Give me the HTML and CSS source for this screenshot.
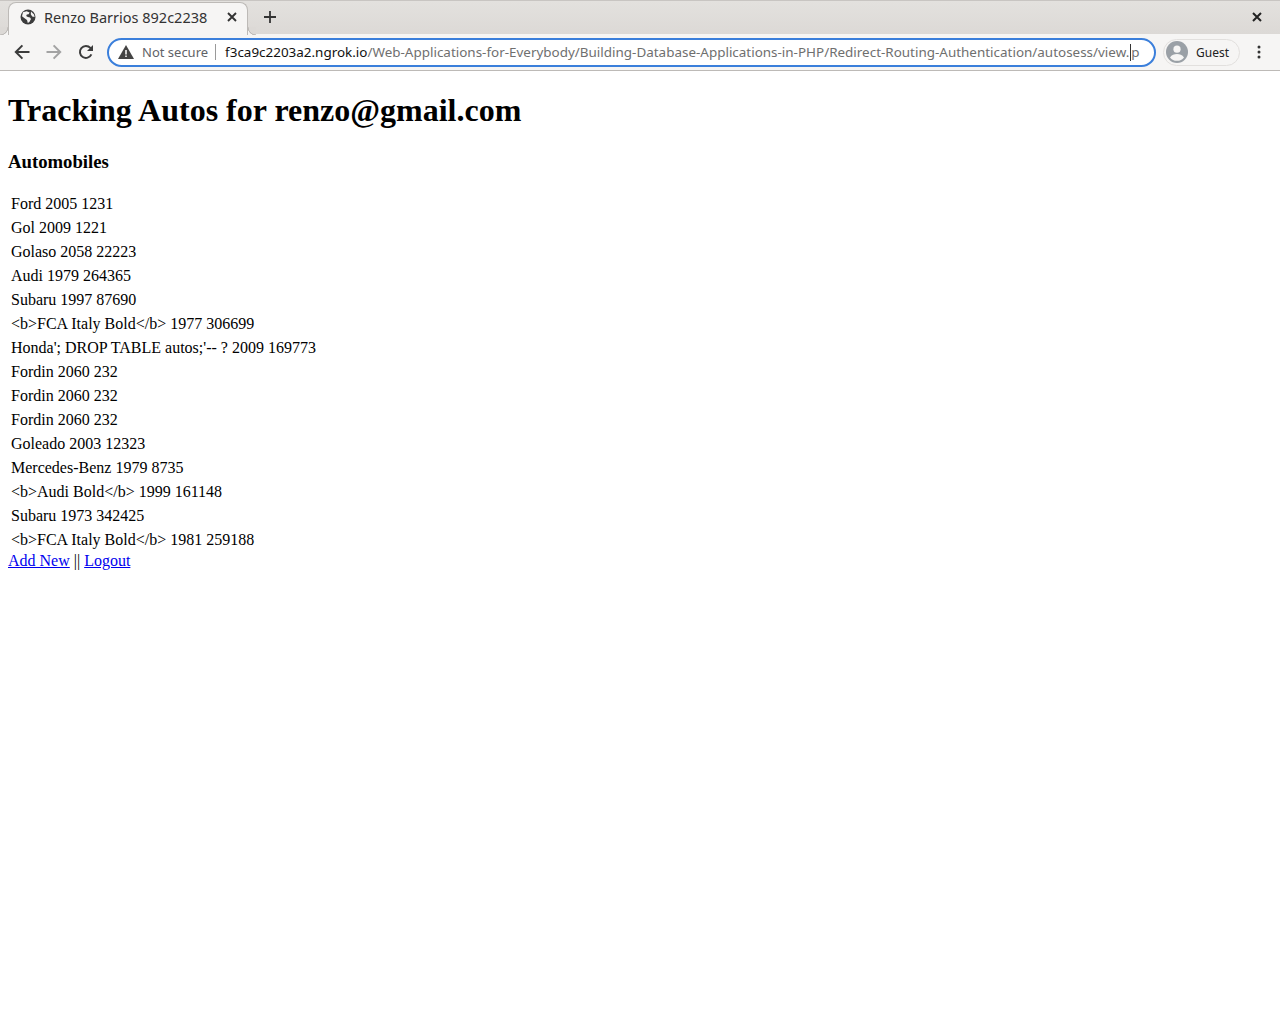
FILE: index.html
```html
<!DOCTYPE html>
<html lang="en">
<head>
  <meta charset="UTF-8">
  <title>Renzo Barrios 892c2238</title>
  <link rel="stylesheet" href="styles.css">
</head>
<body>
  <header class="browser">
    <div class="tabstrip">
      <div class="tab">
        <svg class="favicon" width="16" height="16" viewBox="0 0 16 16"><circle cx="8" cy="8" r="7.5" fill="#3c3c3c"/><path d="M3 3.2 6.6 2.2 9.6 3.4 8.6 5.2 6.8 5.4 6.2 7 7.8 8 10 8.4 11 10 9.4 13 7.8 14 7 11 4.6 9.2 2 7.2Z M11 2.6 14 5.4 14.6 8 12.2 7.4 10.8 5.2Z" fill="#f6f5f4"/></svg>
        <span class="tab-title">Renzo Barrios 892c2238</span>
        <svg class="tab-close" width="10" height="10" viewBox="0 0 10 10"><path d="M1 1 9 9M9 1 1 9" stroke="#333" stroke-width="1.9"/></svg>
      </div>
      <svg class="newtab" width="12" height="12" viewBox="0 0 12 12"><path d="M6 0V12M0 6H12" stroke="#333" stroke-width="1.8"/></svg>
      <svg class="winclose" width="10" height="10" viewBox="0 0 10 10"><path d="M1 1 9 9M9 1 1 9" stroke="#222" stroke-width="2"/></svg>
    </div>
    <div class="toolbar">
      <svg class="navicon" width="16" height="16" viewBox="0 0 16 16"><path d="M15.5 8H2M8.4 1.4 1.8 8l6.6 6.6" fill="none" stroke="#3c3c3c" stroke-width="2"/></svg>
      <svg class="navicon" width="16" height="16" viewBox="0 0 16 16"><path d="M.5 8H14M7.6 1.4 14.2 8l-6.6 6.6" fill="none" stroke="#a3a3a3" stroke-width="2"/></svg>
      <svg class="navicon" width="16" height="16" viewBox="0 0 16 16"><path d="M13.4 10.4A6 6 0 1 1 12.4 3.9L14 5.6" fill="none" stroke="#3c3c3c" stroke-width="2"/><path d="M15 1V7H9Z" fill="#3c3c3c"/></svg>
      <div class="omnibox">
        <svg class="warn" width="16" height="14" viewBox="0 0 16 14"><path d="M8 0 16 14H0Z" fill="#444"/><path d="M7.2 5H8.8V9.4H7.2ZM7.2 10.4H8.8V12H7.2Z" fill="#f6f5f4"/></svg>
        <span class="not-secure">Not secure</span>
        <span class="divider"></span>
        <span class="url"><span class="host">f3ca9c2203a2.ngrok.io</span>/Web-Applications-for-Everybody/Building-Database-Applications-in-PHP/Redirect-Routing-Authentication/autosess/view.<span class="caret"></span>p</span>
      </div>
      <div class="profile">
        <svg width="22" height="22" viewBox="0 0 22 22"><circle cx="11" cy="11" r="11" fill="#9aa0a6"/><circle cx="11" cy="8.2" r="3.6" fill="#f6f5f4"/><path d="M4 16.4C5.6 13.8 8.4 13 11 13s5.4.8 7 3.4A8.8 8.8 0 0 1 11 19.8 8.8 8.8 0 0 1 4 16.4Z" fill="#f6f5f4"/></svg>
        <span>Guest</span>
      </div>
      <svg class="menu" width="4" height="14" viewBox="0 0 4 14"><circle cx="2" cy="2" r="1.5" fill="#333"/><circle cx="2" cy="7" r="1.5" fill="#333"/><circle cx="2" cy="12" r="1.5" fill="#333"/></svg>
    </div>
  </header>

  <main class="page">
    <h1>Tracking Autos for renzo@gmail.com</h1>
    <h3>Automobiles</h3>
    <table>
      <tr><td>Ford 2005 1231</td></tr>
      <tr><td>Gol 2009 1221</td></tr>
      <tr><td>Golaso 2058 22223</td></tr>
      <tr><td>Audi 1979 264365</td></tr>
      <tr><td>Subaru 1997 87690</td></tr>
      <tr><td>&lt;b&gt;FCA Italy Bold&lt;/b&gt; 1977 306699</td></tr>
      <tr><td>Honda'; DROP TABLE autos;'-- ? 2009 169773</td></tr>
      <tr><td>Fordin 2060 232</td></tr>
      <tr><td>Fordin 2060 232</td></tr>
      <tr><td>Fordin 2060 232</td></tr>
      <tr><td>Goleado 2003 12323</td></tr>
      <tr><td>Mercedes-Benz 1979 8735</td></tr>
      <tr><td>&lt;b&gt;Audi Bold&lt;/b&gt; 1999 161148</td></tr>
      <tr><td>Subaru 1973 342425</td></tr>
      <tr><td>&lt;b&gt;FCA Italy Bold&lt;/b&gt; 1981 259188</td></tr>
    </table>
    <a href="#">Add New</a> || <a href="#">Logout</a>
  </main>
</body>
</html>
```

FILE: styles.css
```css
body {
  margin: 0;
  background: #fff;
  color: #000;
  font-family: "Liberation Serif", serif;
  font-size: 16px;
}

/* Browser window */
.browser {
  font-family: "Noto Sans", sans-serif;
  color: #333;
}

.tabstrip {
  display: flex;
  align-items: center;
  height: 34px;
  padding: 0 0 2px 8px;
  box-sizing: border-box;
  background: linear-gradient(#e3e1de, #dcd9d6);
  border-top: 1px solid #c8c5c2;
}

.tab {
  position: relative;
  display: flex;
  align-items: center;
  align-self: flex-end;
  width: 240px;
  height: 33px;
  margin-bottom: -3px;
  padding: 0 10px 4px 11px;
  box-sizing: border-box;
  background: #f6f5f4;
  border: 1px solid #bdbab7;
  border-bottom: none;
  border-radius: 8px 8px 0 0;
}

.tab::before,
.tab::after {
  content: "";
  position: absolute;
  bottom: 0;
  width: 8px;
  height: 8px;
}

.tab::before {
  left: -9px;
  background: radial-gradient(circle at 0 0, #dcd9d6 7.2px, #bdbab7 7.7px, #bdbab7 8.2px, #f6f5f4 8.7px);
}

.tab::after {
  right: -9px;
  background: radial-gradient(circle at 100% 0, #dcd9d6 7.2px, #bdbab7 7.7px, #bdbab7 8.2px, #f6f5f4 8.7px);
}

.tab-title {
  flex: 1;
  margin-left: 8px;
  font-size: 14.5px;
  white-space: nowrap;
}

.newtab {
  margin-left: 16px;
}

.winclose {
  margin-left: auto;
  margin-right: 18px;
}

.toolbar {
  display: flex;
  align-items: center;
  height: 37px;
  padding-left: 14px;
  box-sizing: border-box;
  background: #f6f5f4;
  border-bottom: 1px solid #bdbab7;
}

.navicon {
  margin-right: 16px;
  flex: none;
}

.omnibox {
  display: flex;
  align-items: center;
  width: 1049px;
  height: 29px;
  margin-left: -3px;
  padding-left: 9px;
  box-sizing: border-box;
  background: #fff;
  border: 2px solid #3b7fdb;
  border-radius: 15px;
  font-size: 13px;
  white-space: nowrap;
  overflow: hidden;
}

.warn {
  flex: none;
}

.not-secure {
  margin-left: 8px;
  color: #5f6368;
}

.divider {
  width: 1px;
  height: 16px;
  margin: 0 9px 0 7px;
  background: #9a9a9a;
}

.url {
  font-size: 13.45px;
  color: #6f6f6f;
}

.host {
  color: #111;
}

.caret {
  display: inline-block;
  width: 1px;
  height: 17px;
  margin-left: 1px;
  vertical-align: -4px;
  background: #333;
}

.profile {
  display: flex;
  align-items: center;
  gap: 8px;
  width: 77px;
  height: 27px;
  margin-left: 7px;
  padding-left: 2px;
  box-sizing: border-box;
  border: 1px solid #e2e0de;
  border-radius: 14px;
  font-size: 12px;
  color: #222;
}

.menu {
  margin-left: 17px;
}

/* Page content */
.page {
  padding: 0 8px;
}

table {
  border-spacing: 0;
}

td {
  padding: 3px;
}
```
